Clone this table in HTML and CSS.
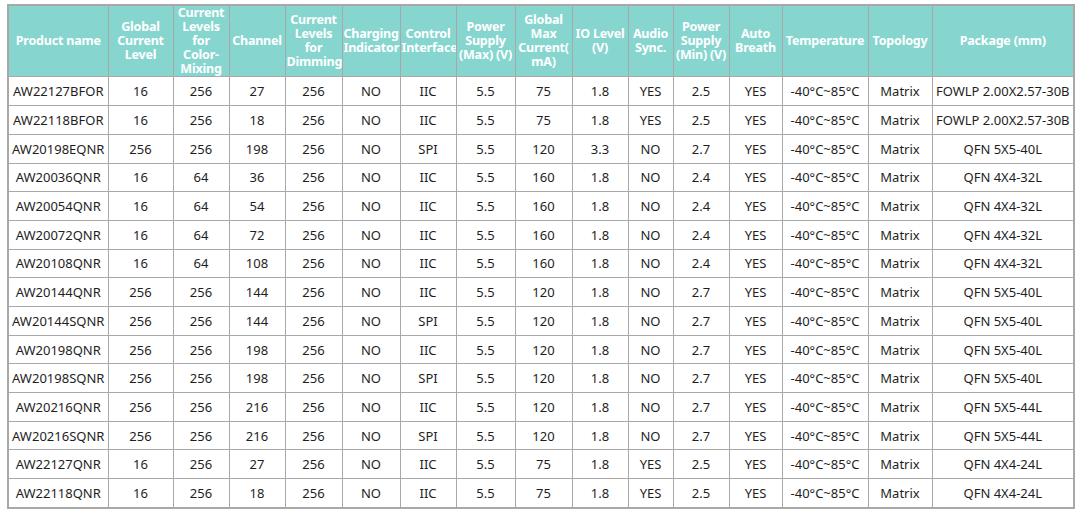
FILE: index.html
```html
<!DOCTYPE html>
<html>
<head>
<meta charset="utf-8">
<link rel="stylesheet" href="styles.css">
</head>
<body>
<table class="spec">
<colgroup>
<col style="width:100px"><col style="width:65px"><col style="width:56px"><col style="width:56px"><col style="width:57px"><col style="width:58px"><col style="width:56px"><col style="width:59px"><col style="width:57px"><col style="width:56px"><col style="width:45px"><col style="width:56px"><col style="width:53px"><col style="width:86px"><col style="width:64px"><col style="width:142px">
</colgroup>
<thead>
<tr>
<th>Product name</th><th>Global Current Level</th><th>Current Levels for Color-Mixing</th><th>Channel</th><th>Current Levels for Dimming</th><th>Charging Indicator</th><th>Control Interface</th><th>Power Supply (Max) (V)</th><th>Global Max Current( mA)</th><th>IO Level (V)</th><th>Audio Sync.</th><th>Power Supply (Min) (V)</th><th>Auto Breath</th><th>Temperature</th><th>Topology</th><th>Package (mm)</th>
</tr>
</thead>
<tbody>
<tr><td>AW22127BFOR</td><td>16</td><td>256</td><td>27</td><td>256</td><td>NO</td><td>IIC</td><td>5.5</td><td>75</td><td>1.8</td><td>YES</td><td>2.5</td><td>YES</td><td>-40°C~85°C</td><td>Matrix</td><td>FOWLP 2.00X2.57-30B</td></tr>
<tr><td>AW22118BFOR</td><td>16</td><td>256</td><td>18</td><td>256</td><td>NO</td><td>IIC</td><td>5.5</td><td>75</td><td>1.8</td><td>YES</td><td>2.5</td><td>YES</td><td>-40°C~85°C</td><td>Matrix</td><td>FOWLP 2.00X2.57-30B</td></tr>
<tr><td>AW20198EQNR</td><td>256</td><td>256</td><td>198</td><td>256</td><td>NO</td><td>SPI</td><td>5.5</td><td>120</td><td>3.3</td><td>NO</td><td>2.7</td><td>YES</td><td>-40°C~85°C</td><td>Matrix</td><td>QFN 5X5-40L</td></tr>
<tr><td>AW20036QNR</td><td>16</td><td>64</td><td>36</td><td>256</td><td>NO</td><td>IIC</td><td>5.5</td><td>160</td><td>1.8</td><td>NO</td><td>2.4</td><td>YES</td><td>-40°C~85°C</td><td>Matrix</td><td>QFN 4X4-32L</td></tr>
<tr><td>AW20054QNR</td><td>16</td><td>64</td><td>54</td><td>256</td><td>NO</td><td>IIC</td><td>5.5</td><td>160</td><td>1.8</td><td>NO</td><td>2.4</td><td>YES</td><td>-40°C~85°C</td><td>Matrix</td><td>QFN 4X4-32L</td></tr>
<tr><td>AW20072QNR</td><td>16</td><td>64</td><td>72</td><td>256</td><td>NO</td><td>IIC</td><td>5.5</td><td>160</td><td>1.8</td><td>NO</td><td>2.4</td><td>YES</td><td>-40°C~85°C</td><td>Matrix</td><td>QFN 4X4-32L</td></tr>
<tr><td>AW20108QNR</td><td>16</td><td>64</td><td>108</td><td>256</td><td>NO</td><td>IIC</td><td>5.5</td><td>160</td><td>1.8</td><td>NO</td><td>2.4</td><td>YES</td><td>-40°C~85°C</td><td>Matrix</td><td>QFN 4X4-32L</td></tr>
<tr><td>AW20144QNR</td><td>256</td><td>256</td><td>144</td><td>256</td><td>NO</td><td>IIC</td><td>5.5</td><td>120</td><td>1.8</td><td>NO</td><td>2.7</td><td>YES</td><td>-40°C~85°C</td><td>Matrix</td><td>QFN 5X5-40L</td></tr>
<tr><td>AW20144SQNR</td><td>256</td><td>256</td><td>144</td><td>256</td><td>NO</td><td>SPI</td><td>5.5</td><td>120</td><td>1.8</td><td>NO</td><td>2.7</td><td>YES</td><td>-40°C~85°C</td><td>Matrix</td><td>QFN 5X5-40L</td></tr>
<tr><td>AW20198QNR</td><td>256</td><td>256</td><td>198</td><td>256</td><td>NO</td><td>IIC</td><td>5.5</td><td>120</td><td>1.8</td><td>NO</td><td>2.7</td><td>YES</td><td>-40°C~85°C</td><td>Matrix</td><td>QFN 5X5-40L</td></tr>
<tr><td>AW20198SQNR</td><td>256</td><td>256</td><td>198</td><td>256</td><td>NO</td><td>SPI</td><td>5.5</td><td>120</td><td>1.8</td><td>NO</td><td>2.7</td><td>YES</td><td>-40°C~85°C</td><td>Matrix</td><td>QFN 5X5-40L</td></tr>
<tr><td>AW20216QNR</td><td>256</td><td>256</td><td>216</td><td>256</td><td>NO</td><td>IIC</td><td>5.5</td><td>120</td><td>1.8</td><td>NO</td><td>2.7</td><td>YES</td><td>-40°C~85°C</td><td>Matrix</td><td>QFN 5X5-44L</td></tr>
<tr><td>AW20216SQNR</td><td>256</td><td>256</td><td>216</td><td>256</td><td>NO</td><td>SPI</td><td>5.5</td><td>120</td><td>1.8</td><td>NO</td><td>2.7</td><td>YES</td><td>-40°C~85°C</td><td>Matrix</td><td>QFN 5X5-44L</td></tr>
<tr><td>AW22127QNR</td><td>16</td><td>256</td><td>27</td><td>256</td><td>NO</td><td>IIC</td><td>5.5</td><td>75</td><td>1.8</td><td>YES</td><td>2.5</td><td>YES</td><td>-40°C~85°C</td><td>Matrix</td><td>QFN 4X4-24L</td></tr>
<tr><td>AW22118QNR</td><td>16</td><td>256</td><td>18</td><td>256</td><td>NO</td><td>IIC</td><td>5.5</td><td>75</td><td>1.8</td><td>YES</td><td>2.5</td><td>YES</td><td>-40°C~85°C</td><td>Matrix</td><td>QFN 4X4-24L</td></tr>
</tbody>
</table>
</body>
</html>
```
FILE: styles.css
```css
html, body {
  margin: 0;
  padding: 0;
  background: #ffffff;
}
body {
  padding: 4px 0 0 7px;
  font-family: "Noto Sans", "Open Sans", sans-serif;
  color: #1e1e1e;
}
.spec {
  border-collapse: collapse;
  table-layout: fixed;
  width: 1066px;
  border: 2px solid #a8a8a8;
}
.spec th,
.spec td {
  border: 1px solid #a8a8a8;
  text-align: center;
  vertical-align: middle;
  padding: 0 1px;
  overflow: hidden;
  white-space: nowrap;
}
.spec th {
  background: #86d6cf;
  color: #ffffff;
  font-weight: 700;
  font-size: 12.5px;
  line-height: 14.1px;
  height: 70px;
  white-space: normal;
  letter-spacing: -0.2px;
}
.spec td {
  font-size: 13px;
  height: 27.7px;
  line-height: 16px;
}
```
